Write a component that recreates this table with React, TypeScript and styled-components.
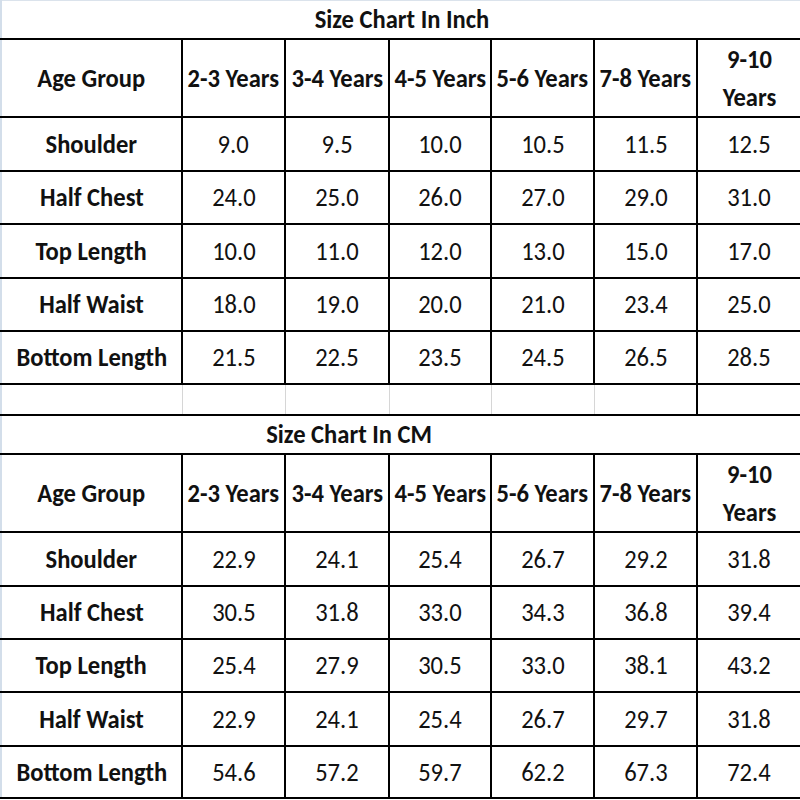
import React from "react";
import styled, { createGlobalStyle } from "styled-components";

const Global = createGlobalStyle`
  html, body { margin: 0; padding: 0; background: #ffffff; }
  body { font-family: Carlito, "Liberation Sans Narrow", "Roboto Condensed", "Liberation Sans", sans-serif; }
`;

const Sheet = styled.table`
  width: 800px;
  table-layout: fixed;
  border-collapse: collapse;
  border-top: 1px solid #dbe3ec;
  border-left: 2px solid #d3deea;
  color: #111111;
`;

const Col = styled.col<{ $w: number }>`
  width: ${(p) => p.$w}px;
`;

const Row = styled.tr<{ $h: number }>`
  height: ${(p) => p.$h}px;
`;

const Squeeze = styled.span`
  display: inline-block;
  transform: scaleX(0.91);
  transform-origin: center;
`;

const Title = styled.td`
  font-size: 27px;
  line-height: 30px;
  font-weight: 700;
  text-align: center;
  padding: 0;
  border-bottom: 2px solid #000;
  white-space: nowrap;
`;

const Cell = styled.td<{ $bold?: boolean }>`
  padding: 0;
  text-align: center;
  vertical-align: middle;
  font-size: 27px;
  line-height: 34px;
  font-weight: ${(p) => (p.$bold ? 700 : 400)};
  border-bottom: 2px solid #000;
  border-right: 2px solid #000;
  white-space: nowrap;
`;

const Wrap = styled(Cell)`
  line-height: 38px;
`;

const Blank = styled.td<{ $strong?: boolean }>`
  padding: 0;
  border-bottom: 2px solid #000;
  border-right: ${(p) => (p.$strong ? "2px solid #000" : "1px solid #d6d6d6")};
`;

const Edge = styled.td`
  padding: 0;
  border-bottom: 2px solid #000;
  border-right: 1px solid #dedede;
`;

const widths = [181, 103, 104, 102, 103, 103, 104];
const ages = ["2-3 Years", "3-4 Years", "4-5 Years", "5-6 Years", "7-8 Years"];

type Data = { label: string; values: string[] }[];

const inch: Data = [
  { label: "Shoulder", values: ["9.0", "9.5", "10.0", "10.5", "11.5", "12.5"] },
  { label: "Half Chest", values: ["24.0", "25.0", "26.0", "27.0", "29.0", "31.0"] },
  { label: "Top Length", values: ["10.0", "11.0", "12.0", "13.0", "15.0", "17.0"] },
  { label: "Half Waist", values: ["18.0", "19.0", "20.0", "21.0", "23.4", "25.0"] },
  { label: "Bottom Length", values: ["21.5", "22.5", "23.5", "24.5", "26.5", "28.5"] },
];

const cm: Data = [
  { label: "Shoulder", values: ["22.9", "24.1", "25.4", "26.7", "29.2", "31.8"] },
  { label: "Half Chest", values: ["30.5", "31.8", "33.0", "34.3", "36.8", "39.4"] },
  { label: "Top Length", values: ["25.4", "27.9", "30.5", "33.0", "38.1", "43.2"] },
  { label: "Half Waist", values: ["22.9", "24.1", "25.4", "26.7", "29.7", "31.8"] },
  { label: "Bottom Length", values: ["54.6", "57.2", "59.7", "62.2", "67.3", "72.4"] },
];

const Header = () => (
  <Row $h={78}>
    <Cell $bold>
      <Squeeze>Age Group</Squeeze>
    </Cell>
    {ages.map((a) => (
      <Cell $bold key={a}>
        <Squeeze>{a}</Squeeze>
      </Cell>
    ))}
    <Wrap $bold>
      <Squeeze>
        9-10
        <br />
        Years
      </Squeeze>
    </Wrap>
  </Row>
);

const Body = ({ rows, heights }: { rows: Data; heights: number[] }) => (
  <>
    {rows.map((r, i) => (
      <Row $h={heights[i]} key={r.label}>
        <Cell $bold>
          <Squeeze>{r.label}</Squeeze>
        </Cell>
        {r.values.map((v, j) => (
          <Cell key={j}>
            <Squeeze>{v}</Squeeze>
          </Cell>
        ))}
      </Row>
    ))}
  </>
);

export default function App() {
  return (
    <>
      <Global />
      <Sheet>
        <colgroup>
          {widths.map((w, i) => (
            <Col $w={w} key={i} />
          ))}
        </colgroup>
        <tbody>
          <Row $h={38}>
            <Title colSpan={7}>
              <Squeeze>Size Chart In Inch</Squeeze>
            </Title>
          </Row>
          <Header />
          <Body rows={inch} heights={[54, 53, 54, 53, 53]} />
          <Row $h={31}>
            {widths.slice(0, 5).map((_, i) => (
              <Blank key={i} />
            ))}
            <Blank $strong />
            <Edge />
          </Row>
          <Row $h={39}>
            <Title colSpan={6}>
              <Squeeze>Size Chart In CM</Squeeze>
            </Title>
            <Edge />
          </Row>
          <Header />
          <Body rows={cm} heights={[54, 53, 53, 54, 52]} />
        </tbody>
      </Sheet>
    </>
  );
}
